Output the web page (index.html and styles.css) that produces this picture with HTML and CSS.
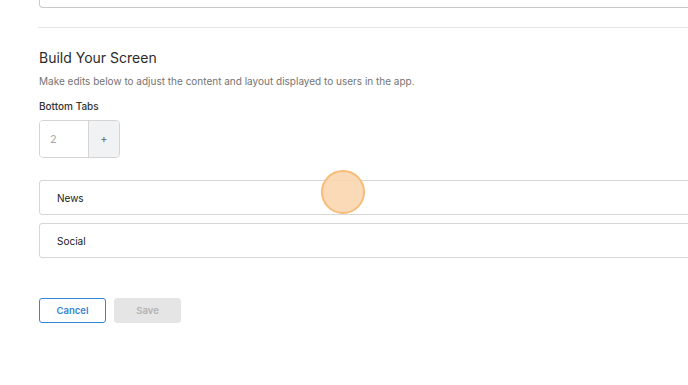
FILE: index.html
```html
<!DOCTYPE html>
<html lang="en">
<head>
    <meta charset="UTF-8">
    <meta name="viewport" content="width=device-width, initial-scale=1.0">
    <title>Build Your Screen</title>
    <link rel="stylesheet" href="styles.css">
</head>
<body>
    <div class="page">
        <div class="prev-box"></div>
        <hr class="divider">
        <section class="builder">
            <h2>Build Your Screen</h2>
            <p class="hint">Make edits below to adjust the content and layout displayed to users in the app.</p>
            <label class="label">Bottom Tabs</label>
            <div class="stepper">
                <input type="text" value="2" readonly>
                <button type="button">+</button>
            </div>
            <ul class="tabs">
                <li>News</li>
                <li>Social</li>
            </ul>
            <div class="actions">
                <button type="button" class="btn btn-cancel">Cancel</button>
                <button type="button" class="btn btn-save" disabled>Save</button>
            </div>
        </section>
    </div>
    <div class="click-dot"></div>
</body>
</html>
```

FILE: styles.css
```css
* {
    margin: 0;
    padding: 0;
    box-sizing: border-box;
}
body {
    font-family: Inter, "Liberation Sans", sans-serif;
    color: #222;
    background: #fff;
    overflow: hidden;
    position: relative;
    height: 385px;
}
.page {
    padding-left: 39px;
    width: 720px;
}
.prev-box {
    height: 8px;
    border: 1px solid #c9c9c9;
    border-top: none;
    border-radius: 0 0 4px 4px;
}
.divider {
    border: none;
    border-top: 1px solid #e3e3e3;
    margin-top: 19px;
    margin-left: -1px;
}
.builder {
    padding-top: 20px;
}
h2 {
    font-size: 14px;
    font-weight: 400;
    line-height: 20px;
    color: #2b2b2b;
}
.hint {
    margin-top: 6px;
    font-size: 10px;
    line-height: 14px;
    color: #747474;
}
.label {
    display: block;
    margin-top: 11px;
    font-size: 10px;
    line-height: 14px;
    font-weight: 500;
    color: #333;
}
.stepper {
    display: flex;
    margin-top: 7px;
    width: 81px;
    height: 38px;
    border: 1px solid #d4d4d4;
    border-radius: 4px;
    overflow: hidden;
}
.stepper input {
    width: 49px;
    border: none;
    border-right: 1px solid #d4d4d4;
    padding-left: 10px;
    font-family: inherit;
    font-size: 11px;
    color: #aaa;
    outline: none;
}
.stepper button {
    flex: 1;
    border: none;
    background: #f1f2f4;
    font-family: inherit;
    font-size: 11px;
    color: #666;
}
.tabs {
    list-style: none;
    margin-top: 22px;
    display: flex;
    flex-direction: column;
    gap: 8px;
}
.tabs li {
    height: 35px;
    display: flex;
    align-items: center;
    padding-left: 17px;
    border: 1px solid #d6d6d6;
    border-radius: 3px;
    font-size: 10px;
    color: #1a1a1a;
}
.actions {
    display: flex;
    gap: 8px;
    margin-top: 40px;
}
.btn {
    width: 67px;
    height: 25px;
    border-radius: 3px;
    font-family: inherit;
    font-size: 9.5px;
    font-weight: 600;
}
.btn-cancel {
    background: #fff;
    border: 1px solid #3584d8;
    color: #3584d8;
}
.btn-save {
    background: #e5e5e5;
    border: 1px solid #e5e5e5;
    color: #b2b2b2;
}
.click-dot {
    position: absolute;
    left: 321px;
    top: 170px;
    width: 44px;
    height: 44px;
    border-radius: 50%;
    background: rgba(251, 214, 176, 0.9);
    border: 2px solid #f6bc78;
}
```
